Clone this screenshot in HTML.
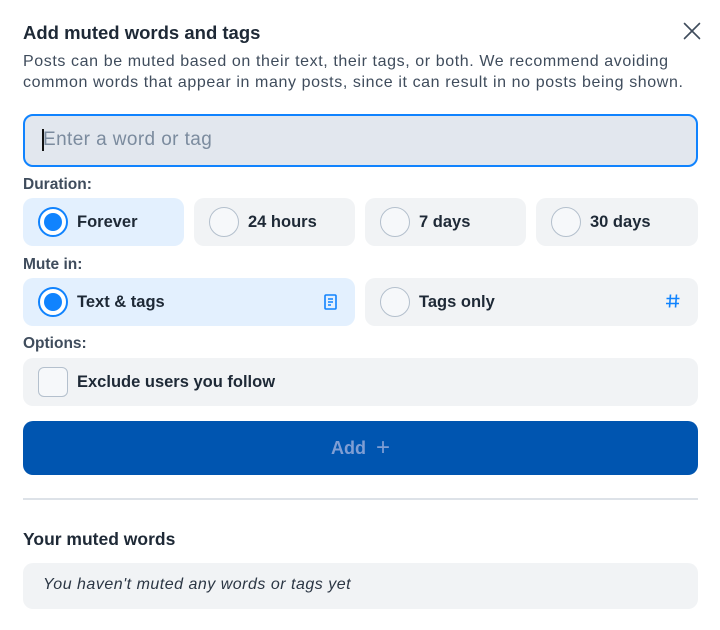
<!DOCTYPE html>
<html><head><meta charset="utf-8"><style>
*{box-sizing:border-box;margin:0;padding:0}
body{width:720px;height:630px;background:#fff;font-family:"Liberation Sans",sans-serif;color:#1f2937;position:relative;overflow:hidden}
.abs{position:absolute}
h1{position:absolute;left:23px;top:22px;font-size:18.5px;font-weight:bold;color:#1e2936}
.desc{position:absolute;left:23px;top:51px;width:690px;font-size:16px;letter-spacing:0.6px;line-height:21px;color:#3f4c5c}
.input{position:absolute;left:23px;top:114px;width:675px;height:53px;border:2px solid #1083fe;border-radius:10px;background:#e2e7ee}
.input span{position:absolute;left:18px;top:13px;font-size:19px;letter-spacing:0.4px;color:#7b8b9e}
.input i{position:absolute;left:17px;top:13px;width:1.5px;height:22px;background:#111}
.lbl{position:absolute;left:23px;font-size:15.5px;font-weight:bold;color:#3f4c5c}
.opt{position:absolute;height:48px;border-radius:10px;background:#f1f3f5}
.opt.on{background:#e3f0fe}
.opt .r{position:absolute;left:15px;top:9px;width:30px;height:30px;border-radius:50%;border:1.5px solid #b4c0cd;background:#f6f8fa}
.opt.on .r{border:2px solid #1083fe;background:#fff}
.opt.on .r::after{content:"";position:absolute;left:4px;top:4px;width:18px;height:18px;border-radius:50%;background:#1083fe}
.opt .t{position:absolute;left:54px;top:15px;font-size:16.5px;font-weight:bold;color:#1e2936}
.btn{position:absolute;left:23px;top:421px;width:675px;height:54px;border-radius:10px;background:#0055b0;color:#7f9ed4;font-size:18px;font-weight:bold;text-align:center;line-height:54px}
</style></head><body>
<h1>Add muted words and tags</h1>
<svg class="abs" style="left:683px;top:22px" width="18" height="18" viewBox="0 0 18 18"><path d="M1.5 1.5L16.5 16.5M16.5 1.5L1.5 16.5" stroke="#3f4c5c" stroke-width="1.6" stroke-linecap="round"/></svg>
<div class="desc">Posts can be muted based on their text, their tags, or both. We recommend avoiding common words that appear in many posts, since it can result in no posts being shown.</div>
<div class="input"><i></i><span>Enter a word or tag</span></div>
<div class="lbl" style="top:176px">Duration:</div>
<div class="opt on" style="left:23px;top:198px;width:161px"><div class="r"></div><div class="t">Forever</div></div>
<div class="opt" style="left:194px;top:198px;width:161px"><div class="r"></div><div class="t">24 hours</div></div>
<div class="opt" style="left:365px;top:198px;width:161px"><div class="r"></div><div class="t">7 days</div></div>
<div class="opt" style="left:536px;top:198px;width:162px"><div class="r"></div><div class="t">30 days</div></div>
<div class="lbl" style="top:256px">Mute in:</div>
<div class="opt on" style="left:23px;top:278px;width:332px"><div class="r"></div><div class="t">Text &amp; tags</div>
<svg class="abs" style="left:301px;top:16px" width="14" height="16" viewBox="0 0 14 16"><rect x="1" y="1" width="11" height="14" rx="1" fill="none" stroke="#1083fe" stroke-width="1.6"/><path d="M4 5h5M4 8h5M4 11h3" stroke="#1083fe" stroke-width="1.4"/></svg></div>
<div class="opt" style="left:365px;top:278px;width:333px"><div class="r"></div><div class="t">Tags only</div>
<svg class="abs" style="left:300px;top:15px" width="16" height="16" viewBox="0 0 16 16"><path d="M5.5 1.5L4.5 14.5M11.5 1.5L10.5 14.5M1.5 5.5H14.5M1 10.5H14" stroke="#1083fe" stroke-width="1.6"/></svg></div>
<div class="lbl" style="top:335px">Options:</div>
<div class="opt" style="left:23px;top:358px;width:675px"><div class="abs" style="left:15px;top:9px;width:30px;height:30px;border:1.5px solid #b4c0cd;border-radius:6px;background:#f6f8fa"></div><div class="t">Exclude users you follow</div></div>
<div class="btn">Add &nbsp;<span style="font-weight:normal;font-size:24px;vertical-align:-1px">+</span></div>
<div class="abs" style="left:23px;top:498px;width:675px;height:2px;background:#dde2e8"></div>
<div class="abs" style="left:23px;top:529px;font-size:17.5px;font-weight:bold;color:#1e2936">Your muted words</div>
<div class="abs" style="left:23px;top:563px;width:675px;height:46px;border-radius:10px;background:#f1f3f5"><span class="abs" style="left:20px;top:13px;font-size:16px;letter-spacing:0.5px;font-style:italic;color:#2b3644">You haven't muted any words or tags yet</span></div>
</body></html>
